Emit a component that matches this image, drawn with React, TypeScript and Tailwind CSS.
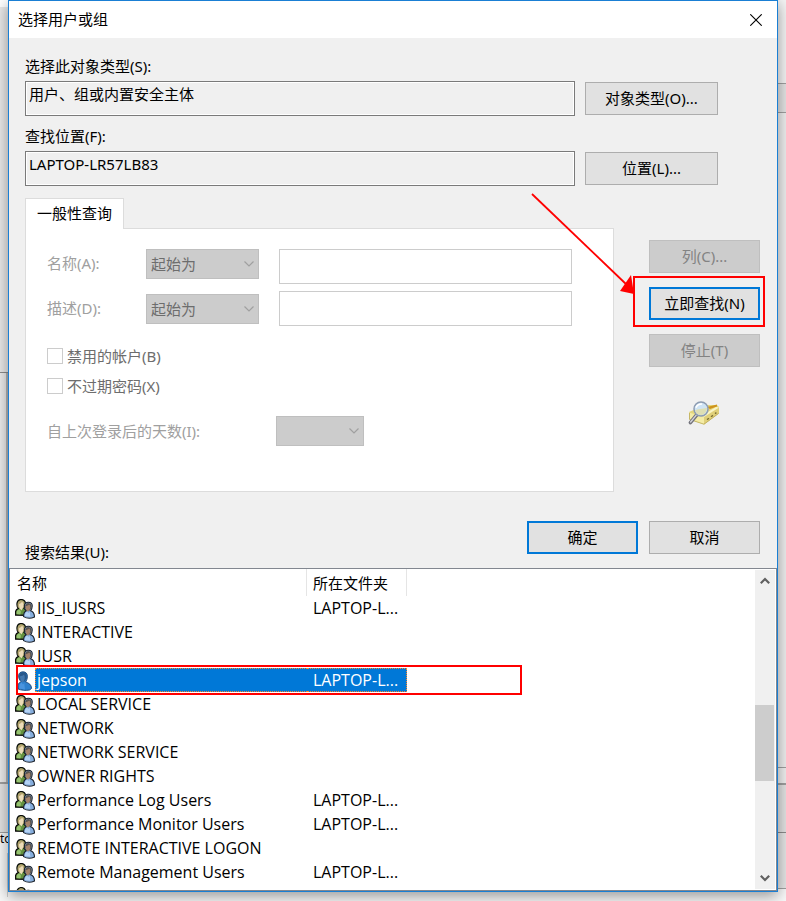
import { clsx } from "clsx";

type Principal = { name: string; folder?: string; single?: boolean };

const principals: Principal[] = [
  { name: "IIS_IUSRS", folder: "LAPTOP-L..." },
  { name: "INTERACTIVE" },
  { name: "IUSR" },
  { name: "jepson", folder: "LAPTOP-L...", single: true },
  { name: "LOCAL SERVICE" },
  { name: "NETWORK" },
  { name: "NETWORK SERVICE" },
  { name: "OWNER RIGHTS" },
  { name: "Performance Log Users", folder: "LAPTOP-L..." },
  { name: "Performance Monitor Users", folder: "LAPTOP-L..." },
  { name: "REMOTE INTERACTIVE LOGON" },
  { name: "Remote Management Users", folder: "LAPTOP-L..." },
  { name: "" }
];

function GroupIcon() {
  return (
    <svg width="20" height="20" viewBox="0 0 20 20" className="block">
      <path
        d="M0.6 16V12.6C0.8 10.8 2 10 3.4 9.4C2 8 1.8 6 2.1 3.8C2.6 1.6 4.2 0.6 6.4 0.6C8.8 0.6 10 1.8 10.4 4C10.5 6.4 9.8 8 9 9.4L11 11V16.4Z"
        fill="#64913f"
        stroke="#0b0b0b"
        strokeWidth="1.3"
      />
      <path d="M1.6 15V13C2 11.4 3 10.8 4.6 10.4L6 12.4L5.4 15.4Z" fill="#95c270" />
      <path d="M2.7 7.6C2.3 3.4 3.6 1.3 6.4 1.3C9 1.4 9.9 3.4 9.6 7L7.8 9.4H4.2Z" fill="#b5a470" />
      <path d="M3.8 5.4C5.4 4.8 6.2 4 7.2 2.8C8.8 4.4 8.8 7.4 7.8 8.8L6.6 11.4L4.6 9.4Z" fill="#ecdcb8" />
      <path
        d="M8.6 17.6C8.4 13.8 9.4 12.6 11.4 11.8C9.6 10.4 9.2 8.6 9.4 6.4C9.8 4.2 11.4 3.2 13.4 3.3C16.2 3.4 17.4 5 17.2 7.2C17.1 9.2 16.4 10.8 15.6 11.8C18 12.6 19.4 13.8 19.5 18C16 19.6 11.6 19.4 8.6 17.6Z"
        fill="#86aedd"
        stroke="#1b222c"
        strokeWidth="1.1"
      />
      <path d="M10.1 8.6C9.8 5.4 11 3.9 13.4 3.9C16 4 17 5.8 16.6 8.4L15 11.4H11.6Z" fill="#5a5550" />
      <path d="M10.4 7.2C12.2 7 13.4 6.4 14.4 5.6C15.8 7.2 15.4 10 14.2 11.2L13 12.8L11.2 11Z" fill="#a5826a" />
      <path d="M9.8 17C9.8 14.4 10.6 13.2 12 12.4L13.4 14L14.6 12.6L15.4 17.8Z" fill="#b4d2f4" />
    </svg>
  );
}

function UserIcon() {
  return (
    <svg width="20" height="20" viewBox="0 0 20 20" className="block">
      <path
        d="M3 18V14.4C3.2 12.4 4.6 11.4 6.2 10.6C4.2 9 3.4 6.8 3.6 4.2C4 1.8 5.8 0.8 8 0.8C10.8 0.8 12.4 2.6 12.4 5.2C12.4 7.8 11.6 9.6 10.6 11C14 12 16.4 13.6 16.6 17.4L14.6 19C10.6 19.8 6.6 19.4 3 18Z"
        fill="#2f80cd"
        stroke="#123b6c"
        strokeWidth="0.8"
      />
      <path d="M4.2 7.4C3.6 3.4 5.2 1.3 8 1.3C11.2 1.4 12.2 4 11.6 7.4L9.6 10.6H6.4Z" fill="#28578a" />
      <path d="M4.8 5.4C6.6 5.2 8 4.6 9 3.6C10.4 6 9.8 9 8.6 10.4L7.4 11.6L5.8 9.4Z" fill="#4377ad" />
      <path d="M4.2 17.4C4 14.2 5 12.6 6.6 11.6L8 13.4L9.2 12L10 18.4Z" fill="#4a94de" />
    </svg>
  );
}

function SearchIcon() {
  return (
    <svg width="34" height="28" viewBox="0 0 34 28" className="block">
      <path d="M2 12L18 5L30 5L32 7V13L17 24.5L2 19Z" fill="#e4d67c" />
      <path d="M20 7L30 4.6L30 6.6L23 9Z" fill="#cf941c" />
      <path d="M2 12.5L17 17V24.5L2 19.5Z" fill="#f4eca6" />
      <path d="M17 17L32 7.5V13.5L17 24.5Z" fill="#e0d07a" />
      <path d="M15 15.6L29 7L32 7.5L17 17Z" fill="#faf5c6" />
      <path d="M2.5 13V19.4L17 24.2L31.6 13.4" stroke="#b9a858" strokeWidth="0.8" fill="none" />
      <path d="M20 19.6L22 18.2M24 16.8L26 15.4M28 13.6L29.4 12.6" stroke="#7a6e34" strokeWidth="1.3" />
      <path d="M10 14.5L3.4 22.6" stroke="#74747c" strokeWidth="3.6" strokeLinecap="round" />
      <path d="M9.5 14.8L3.6 22" stroke="#d4d4dc" strokeWidth="1.3" strokeLinecap="round" />
      <circle cx="14" cy="9" r="7" fill="#cfe4f5" stroke="#8d9cb2" strokeWidth="1.5" />
      <path d="M8 10.4C10 8.6 16 9.4 20 7.4C20 12 17 15 14 15C10.6 15 8.6 13 8 10.4Z" fill="#dedfb4" />
      <path d="M9 7.6C10 5 12 4 15 4" stroke="#fff" strokeWidth="1.6" fill="none" />
    </svg>
  );
}

function Button({
  children,
  className,
  primary,
  disabled
}: {
  children: React.ReactNode;
  className?: string;
  primary?: boolean;
  disabled?: boolean;
}) {
  return (
    <button
      type="button"
      disabled={disabled}
      className={clsx(
        "block h-[33px] shrink-0 pb-0.5",
        primary && "border-2 border-[#0078d7] bg-[#e1e1e1]",
        !primary && !disabled && "border border-[#adadad] bg-[#e1e1e1]",
        disabled && "border border-[#bfbfbf] bg-[#cccccc] text-[#838383]",
        className
      )}
    >
      {children}
    </button>
  );
}

function Select({ id, label, options, className }: { id: string; label?: string; options: string[]; className: string }) {
  return (
    <div className={clsx("relative shrink-0", className)}>
      <select
        id={id}
        aria-label={label}
        disabled
        className="block h-[30px] w-full appearance-none border border-[#bfbfbf] bg-[#cccccc] pl-1 text-[#6d6d6d] disabled:opacity-100"
      >
        {options.map((option) => (
          <option key={option}>{option}</option>
        ))}
      </select>
      <svg width="10" height="6" viewBox="0 0 10 6" className="pointer-events-none absolute right-[5px] top-3">
        <path d="M0.5 0.5L5 5L9.5 0.5" fill="none" stroke="#a0a0a0" strokeWidth="1.2" />
      </svg>
    </div>
  );
}

function ReadonlyField({ id, label, value, action }: { id: string; label: string; value: string; action: string }) {
  return (
    <div>
      <label htmlFor={id} className="block leading-5">
        {label}
      </label>
      <div className="mt-[5px] flex items-center gap-[10px] pr-[42px]">
        <input
          id={id}
          readOnly
          value={value}
          className="h-[35px] min-w-0 flex-1 border border-[#7a7a7a] bg-[#f0f0f0] pb-[10px] pl-[3px] inset-ring inset-ring-white"
        />
        <Button className="w-[133px]">{action}</Button>
      </div>
    </div>
  );
}

function QueryMatch({ id, label }: { id: string; label: string }) {
  return (
    <div className="flex h-[30px] items-center">
      <label htmlFor={id} className="w-[99px] shrink-0 pb-0.5">
        {label}
      </label>
      <Select id={`${id}-match`} label={label} options={["起始为"]} className="w-[113px]" />
    </div>
  );
}

function CheckRow({ id, label }: { id: string; label: string }) {
  return (
    <div className="flex h-[30px] items-center gap-1">
      <input id={id} type="checkbox" disabled className="size-4 appearance-none border border-[#cccccc] bg-white" />
      <label htmlFor={id} className="text-[#6d6d6d]">
        {label}
      </label>
    </div>
  );
}

function ResultRow({ item, selected }: { item: Principal; selected: boolean }) {
  const cell = selected
    ? "h-6 border-y border-dotted border-[#ff8728] bg-[#0078d7] text-white"
    : "h-6";
  return (
    <tr className="h-6">
      <td className="h-6 p-0 pl-[5px] pt-0.5">{item.single ? <UserIcon /> : <GroupIcon />}</td>
      <td className={clsx(cell, "p-0", selected ? "border-l pl-px" : "pl-0.5")}>{item.name}</td>
      <td className={clsx(cell, "p-0 pl-1.5", selected && "border-r")}>{item.folder}</td>
    </tr>
  );
}

function Scrollbar() {
  return (
    <div className="my-px mr-px flex w-5 shrink-0 flex-col items-start bg-[#f0f0f0]">
      <button type="button" aria-label="向上滚动" className="flex h-[22px] w-[19px] items-center justify-center">
        <svg width="10" height="8" viewBox="0 0 10 8">
          <path d="M0.8 6.2L5 2L9.2 6.2" fill="none" stroke="#606060" strokeWidth="2.2" />
        </svg>
      </button>
      <div className="mt-[113px] h-[76px] w-[19px] bg-[#cdcdcd]" />
      <button type="button" aria-label="向下滚动" className="mt-auto flex h-[22px] w-[19px] items-center justify-center">
        <svg width="10" height="8" viewBox="0 0 10 8">
          <path d="M0.8 1.8L5 6L9.2 1.8" fill="none" stroke="#606060" strokeWidth="2.2" />
        </svg>
      </button>
    </div>
  );
}

export default function App() {
  return (
    <div className="flex min-h-screen items-stretch overflow-hidden bg-[#f8f8f8] font-['Noto_Sans','Noto_Sans_CJK_SC',sans-serif] text-[15px] leading-5 text-black">
      {/* windows behind the dialog, left edge */}
      <div className="flex w-2 shrink-0 flex-col overflow-hidden">
        <div className="h-[7px] bg-white" />
        <div className="h-[366px] border-b border-[#8c8c8c] bg-[#e9e9e9]" />
        <div className="h-[409px] border-r-2 border-[#b5b5b5] bg-[#ececec]" />
        <div className="h-[51px] border-b border-t-2 border-[#a0a0a0] bg-[#e3e3e3]" />
        <div className="h-3 overflow-hidden text-[12px] leading-3">to</div>
        <div className="mt-2 h-[44px] border-r border-[#cccccc]" />
      </div>

      <section className="relative flex min-w-0 flex-1 flex-col self-start border border-[#1a7fd4] bg-[#f0f0f0] shadow-[0_4px_14px_rgba(0,0,0,0.4)]">
        <header className="flex h-[37px] items-center justify-between bg-white pl-[9px] pr-[15px]">
          <h1 className="pb-0.5">选择用户或组</h1>
          <button type="button" aria-label="关闭">
            <svg width="12" height="12" viewBox="0 0 12 12">
              <path d="M0.3 0.3L11.7 11.7M11.7 0.3L0.3 11.7" stroke="#000" strokeWidth="1.1" />
            </svg>
          </button>
        </header>

        <div className="pl-4 pr-[17px] pt-[18px]">
          <div className="flex flex-col gap-[10px]">
            <ReadonlyField id="type" label="选择此对象类型(S):" value="用户、组或内置安全主体" action="对象类型(O)..." />
            <ReadonlyField id="location" label="查找位置(F):" value="LAPTOP-LR57LB83" action="位置(L)..." />
          </div>

          <div className="mt-3 flex gap-[35px]">
            <div className="flex min-w-0 flex-1 flex-col">
              <button
                type="button"
                role="tab"
                aria-selected="true"
                className="z-10 -mb-px h-[31px] w-[99px] border border-b-0 border-[#dcdcdc] bg-white pb-0.5"
              >
                一般性查询
              </button>
              <div className="flex h-[264px] flex-col border border-[#dcdcdc] bg-white pl-[21px] pt-5 text-[#a0a0a0]">
                <div className="flex gap-5 pr-[41px]">
                  <div className="flex flex-col gap-[15px]">
                    <QueryMatch id="name" label="名称(A):" />
                    <QueryMatch id="description" label="描述(D):" />
                  </div>
                  <div className="flex min-w-0 flex-1 flex-col gap-[7px]">
                    <input id="name" disabled className="h-[35px] border border-[#cccccc] bg-white" />
                    <input id="description" disabled className="h-[35px] border border-[#cccccc] bg-white" />
                  </div>
                </div>
                <div className="mt-[15px]">
                  <CheckRow id="disabled-accounts" label="禁用的帐户(B)" />
                  <CheckRow id="non-expiring" label="不过期密码(X)" />
                </div>
                <div className="mt-[15px] flex items-center">
                  <label htmlFor="days" className="w-[229px]">
                    自上次登录后的天数(I):
                  </label>
                  <Select id="days" options={[""]} className="w-[88px]" />
                </div>
              </div>
            </div>

            <div className="relative flex w-[111px] shrink-0 flex-col items-center gap-[14px] pt-[42px]">
              <Button disabled className="w-full">
                列(C)...
              </Button>
              <div className="relative w-full">
                <Button primary className="w-full">
                  立即查找(N)
                </Button>
                {/* red callout */}
                <div className="pointer-events-none absolute -bottom-[7px] -left-4 -right-[5px] -top-[11px] border-2 border-[#ff0000]" />
              </div>
              <Button disabled className="w-full">
                停止(T)
              </Button>
              <div className="mr-0.5 mt-[19px]">
                <SearchIcon />
              </div>
              <svg
                width="106"
                height="104"
                viewBox="0 0 106 104"
                className="pointer-events-none absolute -left-[119px] -top-[6px]"
              >
                <path d="M2 2L97 93" stroke="#ff0000" strokeWidth="1.8" />
                <path d="M101 83L104 102L90 99Z" fill="#ff0000" />
              </svg>
            </div>
          </div>

          <div className="mt-[29px] flex justify-end gap-[11px]">
            <Button primary className="w-[111px]">
              确定
            </Button>
            <Button className="w-[111px]">取消</Button>
          </div>
          <h2 className="-mt-3 mb-1.5 w-fit leading-5">搜索结果(U):</h2>
        </div>

        <div className="flex h-[323px] border border-[#828790] bg-white">
          <div className="relative min-w-0 flex-1 overflow-hidden">
            <table className="w-[397px] table-fixed border-separate border-spacing-0 text-left">
              <colgroup>
                <col className="w-[25px]" />
                <col className="w-[272px]" />
                <col />
              </colgroup>
              <thead>
                <tr className="h-[27px]">
                  <th colSpan={2} className="h-[27px] border-r border-[#e5e5e5] p-0 pl-[7px] font-normal">
                    名称
                  </th>
                  <th className="border-r border-[#e5e5e5] p-0 pl-1.5 font-normal">所在文件夹</th>
                </tr>
              </thead>
              <tbody className="font-['Open_Sans',sans-serif] text-[16px] leading-5">
                {principals.map((item) => (
                  <ResultRow key={item.name} item={item} selected={item.name === "jepson"} />
                ))}
              </tbody>
            </table>
            {/* red callout round the selected account */}
            <div className="pointer-events-none absolute left-[6px] top-[96px] h-[30px] w-[506px] border-2 border-[#ff0000]" />
          </div>
          <Scrollbar />
        </div>
      </section>

      {/* windows behind the dialog, right edge */}
      <div className="flex w-2 shrink-0 flex-col overflow-hidden">
        <div className="h-[83px] bg-[#f4f4f4]" />
        <div className="h-[30px] border-y border-[#a0a0a0] bg-[#e4e4e4]" />
        <div className="h-[655px] border-b border-[#a0a0a0] bg-[#efefef]" />
        <div className="h-[17px] border-b-2 border-[#a0a0a0] bg-[#f0f0f0]" />
        <div className="h-[48px] border-b border-[#8c8c8c] bg-[#e3e3e3]" />
        <div className="h-[56px] border-b border-[#a0a0a0] bg-[#e6e6e6]" />
      </div>
    </div>
  );
}
